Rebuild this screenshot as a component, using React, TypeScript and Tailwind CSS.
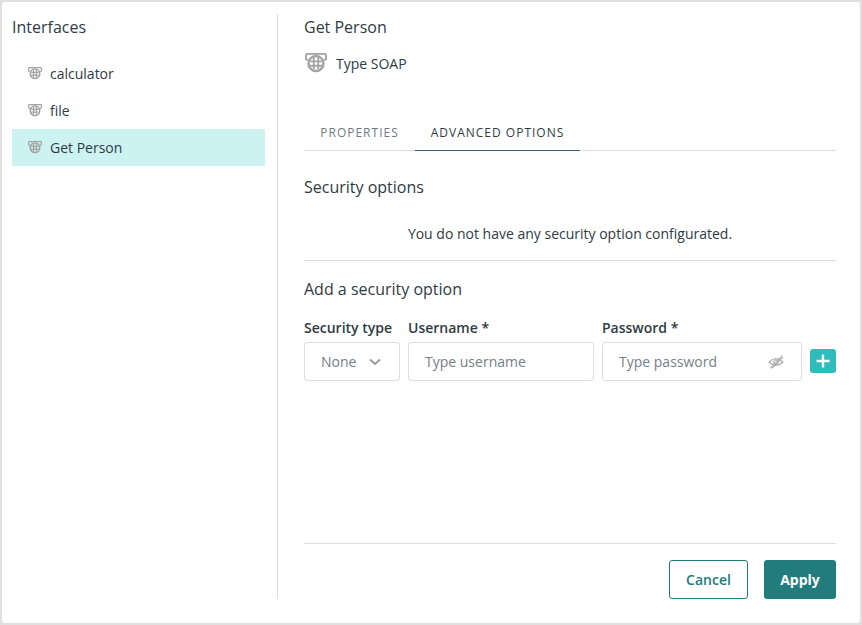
import React from "react";

function SoapIcon({ size = 14, color = "#a3a3a3" }: { size?: number; color?: string }) {
  return (
    <svg width={size} height={(size * 21) / 24} viewBox="0 0 24 21" fill="none" stroke={color} className="shrink-0">
      <path d="M3.5 7.5 H3 Q1 7.5 1 6 V2.5 Q1 1 2.5 1 H21.5 Q23 1 23 2.5 V6 Q23 7.5 21 7.5 H20.5" strokeWidth="2" />
      <circle cx="12" cy="11.5" r="8.2" strokeWidth="2.6" />
      <path d="M9.6 5 V18 M14.4 5 V18 M5.5 9.1 H18.5 M5.5 13.9 H18.5" strokeWidth="2" />
    </svg>
  );
}

function ListItem({ label, active }: { label: string; active?: boolean }) {
  return (
    <div className={`flex h-[37px] items-center gap-[8px] pl-[16px] text-[14px] text-[#2f3b45] ${active ? "bg-[#cdf2f2]" : ""}`}>
      <SoapIcon />
      <span>{label}</span>
    </div>
  );
}

export default function App() {
  return (
    <div
      className="h-[625px] w-[862px] overflow-hidden bg-[#e0e0e0] p-[2px]"
      style={{ fontFamily: '"Open Sans", sans-serif' }}
    >
      <div className="flex h-[621px] rounded-[3px] bg-white pt-[12px] pb-[24px]">
        <aside className="w-[276px] shrink-0 border-r border-[#dedede] pl-[10px] pr-[12px]">
          <h2 className="h-[26px] text-[16px] leading-[26px] text-[#2f3b45]">Interfaces</h2>
          <div className="mt-[15px]">
            <ListItem label="calculator" />
            <ListItem label="file" />
            <ListItem label="Get Person" active />
          </div>
        </aside>

        <main className="ml-[26px] flex w-[532px] flex-col">
          <h2 className="h-[26px] text-[16px] leading-[26px] text-[#2f3b45]">Get Person</h2>
          <div className="mt-[11px] flex h-[24px] items-center gap-[9px] pl-[1px] text-[14px] text-[#2f3b45]">
            <SoapIcon size={22} />
            <span>Type SOAP</span>
          </div>

          <div className="mt-[40px] flex h-[36px] border-b border-[#dedede] text-[12px] tracking-[1px]">
            <div className="flex w-[111px] items-center justify-center pt-px text-[#6f7a82]">PROPERTIES</div>
            <div className="-mb-px flex w-[165px] items-center justify-center border-b border-[#2f6b6b] pt-px text-[#2f3b45]">
              ADVANCED OPTIONS
            </div>
          </div>

          <h3 className="mt-[23px] h-[26px] text-[16px] leading-[26px] text-[#2f3b45]">Security options</h3>
          <p className="mt-[24px] h-[20px] text-center text-[14px] leading-[20px] text-[#2f3b45]">
            You do not have any security option configurated.
          </p>
          <div className="mt-[16px] h-px bg-[#dedede]" />
          <h3 className="mt-[15px] h-[26px] text-[16px] leading-[26px] text-[#2f3b45]">Add a security option</h3>

          <div className="mt-[16px] flex items-end gap-[8px]">
            <div className="w-[96px]">
              <label className="block h-[20px] whitespace-nowrap text-[14px] font-semibold leading-[20px] text-[#2f3b45]">
                Security type
              </label>
              <div className="mt-[4px] flex h-[39px] items-center justify-between rounded-[3px] border border-[#dedede] pl-[16px] pr-[18px] text-[14px] text-[#757f86]">
                <span>None</span>
                <svg width="12" height="8" viewBox="0 0 12 8" fill="none" stroke="#9a9a9a" strokeWidth="2">
                  <path d="M1 1.5 L6 6 L11 1.5" />
                </svg>
              </div>
            </div>
            <div className="w-[186px]">
              <label className="block h-[20px] text-[14px] font-semibold leading-[20px] text-[#2f3b45]">Username *</label>
              <div className="mt-[4px] flex h-[39px] items-center rounded-[3px] border border-[#dedede] pl-[16px] text-[14px] text-[#757f86]">
                Type username
              </div>
            </div>
            <div className="w-[200px]">
              <label className="block h-[20px] text-[14px] font-semibold leading-[20px] text-[#2f3b45]">Password *</label>
              <div className="mt-[4px] flex h-[39px] items-center justify-between rounded-[3px] border border-[#dedede] pl-[16px] pr-[17px] text-[14px] text-[#757f86]">
                <span>Type password</span>
                <svg width="16" height="14" viewBox="0 0 16 14" fill="none" stroke="#a8a8a8" strokeWidth="1.1">
                  <path d="M1 7 Q8 0 15 7 Q8 14 1 7 Z" />
                  <circle cx="8" cy="7" r="2.2" />
                  <path d="M2 13.5 L14 0.5" />
                  <path d="M4 13 L15 2" />
                </svg>
              </div>
            </div>
            <button className="mb-[8px] flex h-[24px] w-[26px] items-center justify-center rounded-[3px] bg-[#2fbcbc]">
              <svg width="14" height="14" viewBox="0 0 14 14" stroke="white" strokeWidth="2.4">
                <path d="M7 0.5 V13.5 M0.5 7 H13.5" />
              </svg>
            </button>
          </div>

          <div className="mt-auto border-t border-[#dedede] pt-[16px]">
            <div className="flex justify-end gap-[16px]">
              <button className="h-[39px] w-[79px] rounded-[3px] border border-[#217c7c] bg-white text-[14px] font-semibold text-[#217c7c]">
                Cancel
              </button>
              <button className="h-[39px] w-[72px] rounded-[3px] bg-[#217c7c] text-[14px] font-bold text-white">
                Apply
              </button>
            </div>
          </div>
        </main>
      </div>
    </div>
  );
}
